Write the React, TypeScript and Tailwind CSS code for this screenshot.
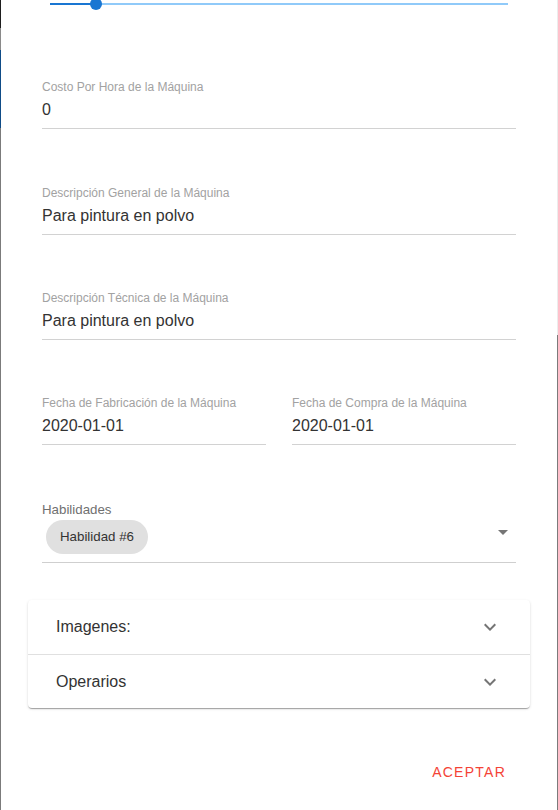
import React from "react";

function Field({ label, value }: { label: string; value: string }) {
  return (
    <div className="flex flex-col border-b border-[#d2d2d2] pb-[9px]">
      <div className="text-[12px] leading-[14px] text-[#a2a2a2]">{label}</div>
      <div className="mt-[6px] text-[16px] leading-[19px] text-[#333]">{value}</div>
    </div>
  );
}

function ExpandMore() {
  return (
    <svg width="24" height="24" viewBox="0 0 24 24" fill="#757575">
      <path d="M16.59 8.59 12 13.17 7.41 8.59 6 10l6 6 6-6z" />
    </svg>
  );
}

export default function App() {
  return (
    <div
      className="flex h-[810px] w-[558px] overflow-hidden bg-white"
      style={{ fontFamily: '"Liberation Sans", Arial, sans-serif' }}
    >
      {/* left backdrop edge */}
      <div className="flex w-[1px] flex-col">
        <div className="h-[28px] bg-[#1e1e1e]" />
        <div className="h-[22px] bg-[#8a8a8a]" />
        <div className="h-[78px] bg-[#0f4c87]" />
        <div className="flex-1 bg-[#7b7b7b]" />
      </div>

      {/* dialog content */}
      <div className="flex flex-1 flex-col px-[27px]">
        <div className="flex flex-col px-[14px]">
          {/* slider */}
          <div className="mx-[8px] pt-[3px]">
            <div className="relative flex h-[2px]">
              <div className="w-[46px] bg-[#1976d2]" />
              <div className="flex-1 bg-[#90caf9]" />
              <div className="absolute left-[40px] top-[-5px] h-[12px] w-[12px] rounded-full bg-[#1976d2]" />
            </div>
          </div>

          <div className="mt-[75px]">
            <Field label="Costo Por Hora de la Máquina" value="0" />
          </div>
          <div className="mt-[57px]">
            <Field label="Descripción General de la Máquina" value="Para pintura en polvo" />
          </div>
          <div className="mt-[56px]">
            <Field label="Descripción Técnica de la Máquina" value="Para pintura en polvo" />
          </div>
          <div className="mt-[56px] grid grid-cols-2 gap-[26px]">
            <Field label="Fecha de Fabricación de la Máquina" value="2020-01-01" />
            <Field label="Fecha de Compra de la Máquina" value="2020-01-01" />
          </div>

          {/* Habilidades select */}
          <div className="mt-[57px] flex flex-col border-b border-[#cfcfcf] pb-[8px]">
            <div className="text-[13.3px] leading-[15px] text-[#707070]">Habilidades</div>
            <div className="mt-[3px] flex items-start justify-between">
              <div className="ml-[4px] flex h-[34px] items-center rounded-full bg-[#e0e0e0] px-[14px] text-[13.3px] text-[#333]">
                Habilidad #6
              </div>
              <svg width="24" height="24" viewBox="0 0 24 24" fill="#757575" className="mr-[1px]">
                <path d="M7 10l5 5 5-5z" />
              </svg>
            </div>
          </div>
        </div>

        {/* accordion */}
        <div className="mt-[37px] flex flex-col rounded-[4px] bg-white shadow-[0px_2px_1px_-1px_rgba(0,0,0,0.2),0px_1px_1px_0px_rgba(0,0,0,0.14),0px_1px_3px_0px_rgba(0,0,0,0.12)]">
          <div className="flex h-[55px] items-center justify-between border-b border-[#e0e0e0] pl-[28px] pr-[28px]">
            <span className="text-[16px] text-[#333]">Imagenes:</span>
            <ExpandMore />
          </div>
          <div className="flex h-[53px] items-center justify-between pl-[28px] pr-[28px]">
            <span className="text-[16px] text-[#333]">Operarios</span>
            <ExpandMore />
          </div>
        </div>

        <div className="mt-[46px] flex justify-end pr-[16px]">
          <button className="flex h-[36px] items-center px-[8px] text-[14px] tracking-[1.25px] text-[#f44336]">
            ACEPTAR
          </button>
        </div>
      </div>

      {/* right edge */}
      <div className="flex w-[1px] flex-col">
        <div className="h-[335px] bg-[#ececec]" />
        <div className="flex-1 bg-[#7b7b7b]" />
      </div>
    </div>
  );
}
